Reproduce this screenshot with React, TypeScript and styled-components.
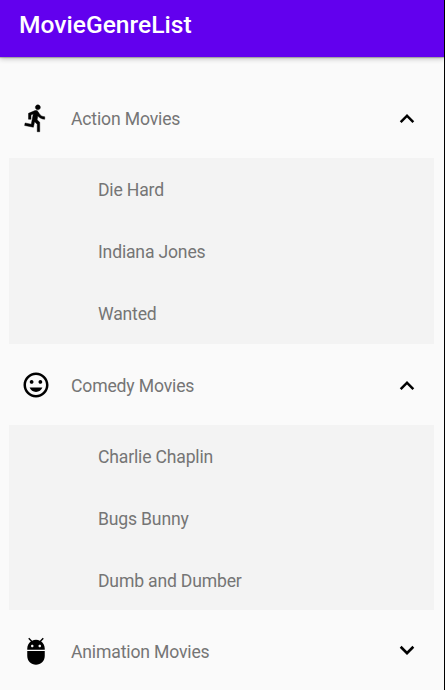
import React, { useState } from 'react';
import styled, { createGlobalStyle } from 'styled-components';

const GlobalStyle = createGlobalStyle`
  body {
    margin: 0;
    background: #fafafa;
  }
`;

const Screen = styled.div`
  box-sizing: border-box;
  width: 445px;
  height: 690px;
  overflow: hidden;
  display: flex;
  flex-direction: column;
  background: #fafafa;
  border-right: 1px solid #000;
  font-family: Roboto, sans-serif;
`;

const AppBar = styled.header`
  box-sizing: border-box;
  flex: none;
  height: 57px;
  padding: 10px 19px 0;
  background: #6200ee;
  box-shadow: 0 1px 1px rgba(0, 0, 0, 0.22), 0 2px 5px rgba(0, 0, 0, 0.22);
`;

const Title = styled.h1`
  margin: 0;
  color: #fff;
  font-size: 24.6px;
  font-weight: 500;
  line-height: 30px;
`;

const List = styled.main`
  flex: none;
  padding: 19.9px 10px 0 9px;
`;

const GroupHeader = styled.button`
  box-sizing: border-box;
  display: flex;
  align-items: center;
  width: 100%;
  height: 81.5px;
  padding: 0.5px 12px 0;
  border: 0;
  background: none;
  font: inherit;
  text-align: left;
`;

const GroupName = styled.span`
  flex: 1;
  margin-left: 20px;
  padding-top: 2px;
  color: #757575;
  font-size: 17.6px;
  letter-spacing: -0.16px;
  line-height: 22px;
`;

const Icon = styled.svg<{ $size: number }>`
  display: block;
  flex: none;
  width: ${(p) => p.$size}px;
  height: ${(p) => p.$size}px;
  fill: #000;
`;

const MovieList = styled.ul`
  margin: 0;
  padding: 0;
  list-style: none;
  background: #f3f3f3;
`;

const Movie = styled.li`
  box-sizing: border-box;
  display: flex;
  align-items: center;
  height: 61.75px;
  padding: 2px 0 0 89px;
  color: #757575;
  font-size: 17.6px;
  letter-spacing: -0.18px;
  line-height: 22px;
`;

const RUN =
  'M13.49 5.48c1.1 0 2-.9 2-2s-.9-2-2-2-2 .9-2 2 .9 2 2 2zm-3.6 13.9l1-4.4 2.1 2v6h2v-7.5l-2.1-2 .6-3c1.3 1.5 3.3 2.5 5.5 2.5v-2c-1.9 0-3.5-1-4.3-2.4l-1-1.6c-.4-.6-1-1-1.7-1-.3 0-.5.1-.8.1l-5.2 2.2v4.7h2v-3.4l1.8-.7-1.6 8.1-4.9-1-.4 2 7 1.4z';
const SMILE =
  'M11.99 2C6.47 2 2 6.48 2 12s4.47 10 9.99 10C17.52 22 22 17.52 22 12S17.52 2 11.99 2zM12 20c-4.42 0-8-3.58-8-8s3.58-8 8-8 8 3.58 8 8-3.58 8-8 8zm3.5-9c.83 0 1.5-.67 1.5-1.5S16.33 8 15.5 8 14 8.67 14 9.5s.67 1.5 1.5 1.5zm-7 0c.83 0 1.5-.67 1.5-1.5S9.33 8 8.5 8 7 8.67 7 9.5 7.67 11 8.5 11zm3.5 6.5c2.33 0 4.31-1.46 5.11-3.5H6.89c.8 2.04 2.78 3.5 5.11 3.5z';
const ROBOT =
  'M5 16c0 3.87 3.13 7 7 7s7-3.13 7-7v-4H5v4zM16.12 4.37l2.1-2.1-.82-.83-2.3 2.31C14.16 3.28 13.12 3 12 3s-2.16.28-3.09.75L6.6 1.44l-.82.83 2.1 2.1C6.14 5.64 5 7.68 5 10v1h14v-1c0-2.32-1.14-4.36-2.88-5.63zM9 9c-.55 0-1-.45-1-1s.45-1 1-1 1 .45 1 1-.45 1-1 1zm6 0c-.55 0-1-.45-1-1s.45-1 1-1 1 .45 1 1-.45 1-1 1z';
const CHEVRON_UP = 'M12 8.7l-5.8 5.8 1.45 1.45L12 11.6l4.35 4.35 1.45-1.45z';
const CHEVRON_DOWN = 'M12 15.1l-5.8-5.8 1.45-1.45L12 12.2l4.35-4.35L17.8 9.3z';

const genres = [
  { name: 'Action Movies', icon: RUN, open: true, movies: ['Die Hard', 'Indiana Jones', 'Wanted'] },
  { name: 'Comedy Movies', icon: SMILE, open: true, movies: ['Charlie Chaplin', 'Bugs Bunny', 'Dumb and Dumber'] },
  { name: 'Animation Movies', icon: ROBOT, open: false, movies: [] as string[] },
];

type Genre = (typeof genres)[number];

function GenreGroup({ genre }: { genre: Genre }) {
  const [open, setOpen] = useState(genre.open);
  return (
    <section>
      <GroupHeader aria-expanded={open} onClick={() => setOpen(!open)}>
        <Icon $size={30} viewBox="0 0 24 24">
          <path d={genre.icon} stroke="#000" strokeWidth={genre.icon === RUN ? 0.35 : 0} />
        </Icon>
        <GroupName>{genre.name}</GroupName>
        <Icon $size={30} viewBox="0 0 24 24">
          <path d={open ? CHEVRON_UP : CHEVRON_DOWN} />
        </Icon>
      </GroupHeader>
      {open && genre.movies.length > 0 && (
        <MovieList>
          {genre.movies.map((movie) => (
            <Movie key={movie}>{movie}</Movie>
          ))}
        </MovieList>
      )}
    </section>
  );
}

export default function App() {
  return (
    <>
      <GlobalStyle />
      <Screen>
        <AppBar>
          <Title>MovieGenreList</Title>
        </AppBar>
        <List>
          {genres.map((genre) => (
            <GenreGroup key={genre.name} genre={genre} />
          ))}
        </List>
      </Screen>
    </>
  );
}
